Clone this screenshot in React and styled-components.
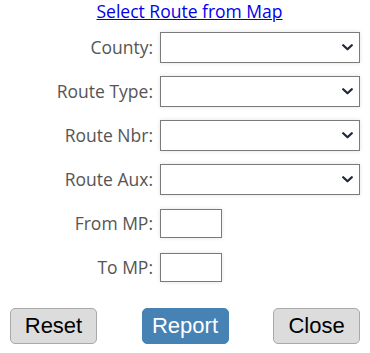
import React from "react";
import styled, { createGlobalStyle } from "styled-components";

const GlobalStyle = createGlobalStyle`
  body {
    margin: 0;
    background: #fff;
    font-family: "Open Sans", "Noto Sans", sans-serif;
  }
`;

const Panel = styled.div`
  width: 370px;
  height: 353px;
  display: flex;
  flex-direction: column;
`;

const MapLink = styled.a`
  align-self: center;
  margin-left: 9px;
  height: 25px;
  line-height: 22px;
  font-size: 17.5px;
  color: #0000ee;
  text-decoration: underline;
  cursor: pointer;
`;

const Form = styled.div`
  display: grid;
  grid-template-columns: 153px 1fr;
  grid-auto-rows: 44px;
  column-gap: 7px;
  align-items: center;
`;

const Label = styled.label`
  text-align: right;
  font-size: 17.5px;
  color: #555;
`;

const SelectWrap = styled.div`
  position: relative;
  width: 200px;
  height: 31px;
`;

const Select = styled.select`
  appearance: none;
  width: 100%;
  height: 100%;
  border: 1px solid #7a7a7a;
  border-radius: 0;
  background: #fff;
  box-shadow: 0 0 4px rgba(0, 0, 0, 0.12);
  font-family: inherit;
  font-size: 14px;
  padding: 0 24px 0 4px;
`;

const Chevron = styled.svg`
  position: absolute;
  right: 7px;
  top: 12px;
  pointer-events: none;
`;

const MpInput = styled.input`
  width: 62px;
  height: 29px;
  box-sizing: border-box;
  border: 1px solid #7a7a7a;
  box-shadow: 0 0 4px rgba(0, 0, 0, 0.12);
  font-family: inherit;
  font-size: 14px;
  padding: 0 3px;
`;

const ButtonRow = styled.div`
  display: flex;
  justify-content: space-between;
  padding: 0 10px;
  margin-top: 19px;
`;

const Button = styled.button`
  width: 87px;
  height: 36px;
  box-sizing: border-box;
  border-radius: 5px;
  font-family: "Liberation Sans", Arial, sans-serif;
  font-size: 22px;
  padding: 0;
  border: 1px solid ${(p) => (p.$primary ? "#4682b4" : "#a9a9a9")};
  background: ${(p) => (p.$primary ? "#4682b4" : "#dcdcdc")};
  color: ${(p) => (p.$primary ? "#fff" : "#000")};
  cursor: pointer;
`;

function DropDown() {
  return (
    <SelectWrap>
      <Select>
        <option value=""></option>
      </Select>
      <Chevron width="11" height="7" viewBox="0 0 11 7">
        <path
          d="M1.2 1.2 L5.5 5.3 L9.8 1.2"
          fill="none"
          stroke="#1e2838"
          strokeWidth="2.2"
          strokeLinecap="round"
          strokeLinejoin="round"
        />
      </Chevron>
    </SelectWrap>
  );
}

export default function App() {
  return (
    <>
      <GlobalStyle />
      <Panel>
        <MapLink>Select Route from Map</MapLink>
        <Form>
          <Label>County:</Label>
          <DropDown />
          <Label>Route Type:</Label>
          <DropDown />
          <Label>Route Nbr:</Label>
          <DropDown />
          <Label>Route Aux:</Label>
          <DropDown />
          <Label>From MP:</Label>
          <div>
            <MpInput type="text" />
          </div>
          <Label>To MP:</Label>
          <div>
            <MpInput type="text" />
          </div>
        </Form>
        <ButtonRow>
          <Button>Reset</Button>
          <Button $primary>Report</Button>
          <Button>Close</Button>
        </ButtonRow>
      </Panel>
    </>
  );
}
